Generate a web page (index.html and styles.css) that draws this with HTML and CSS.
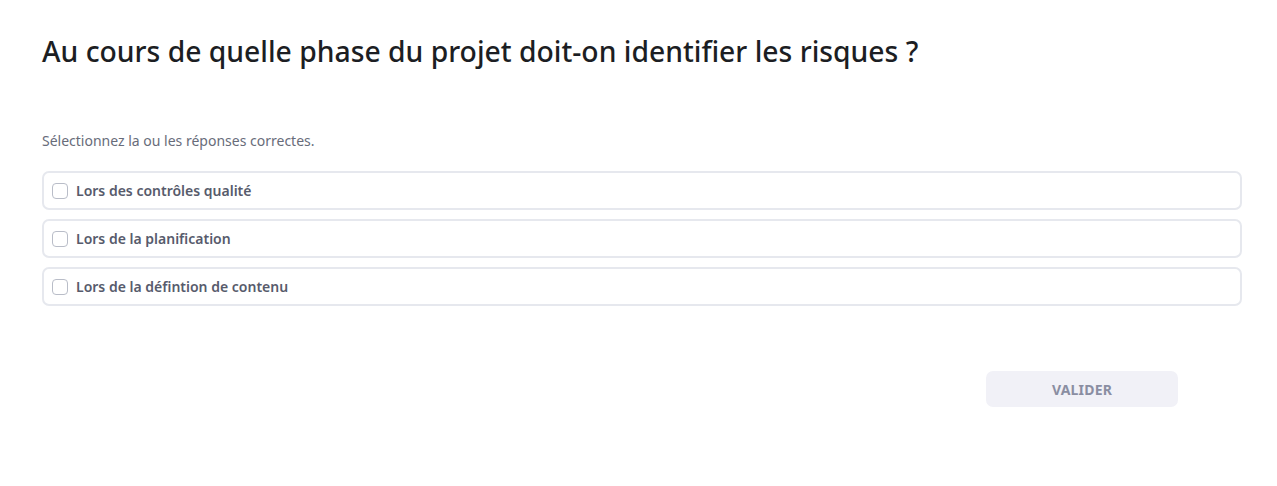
FILE: index.html
```html
<!DOCTYPE html>
<html lang="fr">
<head>
<meta charset="utf-8">
<link rel="stylesheet" href="styles.css">
</head>
<body>
<main class="quiz">
  <h1 class="question">Au cours de quelle phase du projet doit-on identifier les risques ?</h1>
  <p class="hint">Sélectionnez la ou les réponses correctes.</p>
  <div class="options">
    <label class="option"><span class="box"></span><span class="label">Lors des contrôles qualité</span></label>
    <label class="option"><span class="box"></span><span class="label">Lors de la planification</span></label>
    <label class="option"><span class="box"></span><span class="label">Lors de la défintion de contenu</span></label>
  </div>
  <div class="actions">
    <button class="submit" type="button">VALIDER</button>
  </div>
</main>
</body>
</html>
```
FILE: styles.css
```css
* { box-sizing: border-box; }
html, body { margin: 0; padding: 0; background: #fff; }
body { font-family: "Noto Sans", "Open Sans", sans-serif; color: #1d1f24; }
.quiz { padding: 31px 35px 0 42px; }
.question {
  margin: 0;
  font-size: 28.3px;
  line-height: 40px;
  font-weight: 500;
  color: #1c1e23;
}
.hint {
  margin: 60px 0 0;
  font-size: 14px;
  line-height: 20px;
  color: #686c7a;
}
.options { margin-top: 20px; display: flex; flex-direction: column; gap: 9px; }
.option {
  display: flex;
  align-items: center;
  height: 39px;
  padding: 0 8px;
  border: 2px solid #e6e8ee;
  border-radius: 7px;
  gap: 8px;
}
.box {
  width: 16px; height: 16px;
  border: 1px solid #b9bdc8;
  border-radius: 4px;
  background: #fff;
  flex: none;
}
.label { font-size: 14px; font-weight: 600; color: #575b6c; }
.actions { display: flex; justify-content: flex-end; padding-right: 64px; margin-top: 65px; }
.submit {
  width: 192px; height: 36px;
  border: none; border-radius: 7px;
  background: #f1f1f7;
  font-family: "Noto Sans", "Open Sans", sans-serif;
  font-size: 14px; font-weight: 700;
  color: #8a8ea2;
  letter-spacing: 0.2px;
}
```
